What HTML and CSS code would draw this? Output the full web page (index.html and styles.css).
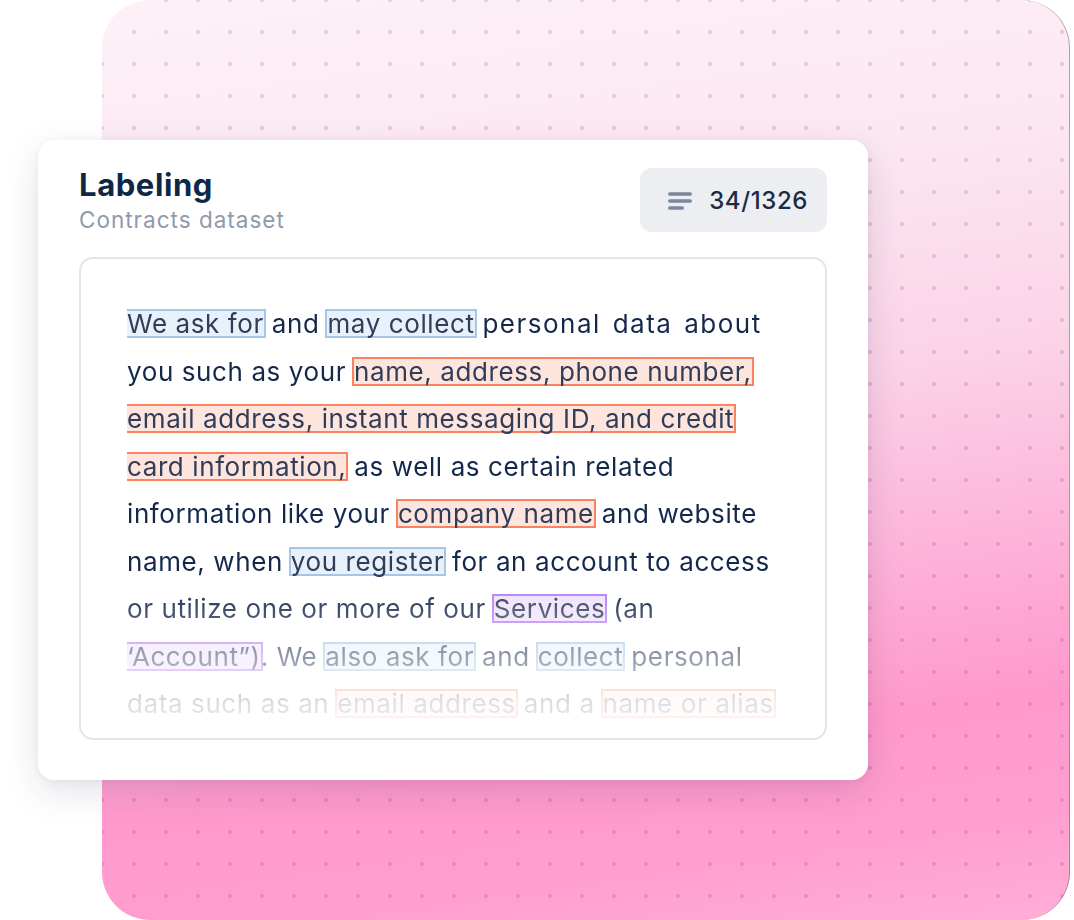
FILE: index.html
```html
<!DOCTYPE html>
<html>
<head>
<meta charset="utf-8">
<link rel="stylesheet" href="styles.css">
</head>
<body>
<div class="stage">
  <div class="panel"></div>
  <div class="card">
    <div class="card-head">
      <div class="titles">
        <div class="title">Labeling</div>
        <div class="subtitle">Contracts dataset</div>
      </div>
      <div class="badge">
        <svg class="badge-icon" width="24" height="20" viewBox="0 0 24 20">
          <rect x="0" y="2.3" width="24" height="3.4" rx="1.7" fill="#7a879c"/>
          <rect x="0" y="9.3" width="24" height="3.4" rx="1.7" fill="#7a879c"/>
          <rect x="0" y="16.3" width="16" height="3.4" rx="1.7" fill="#7a879c"/>
        </svg>
        <span class="count">34/1326</span>
      </div>
    </div>
    <div class="doc">
      <div class="doc-text"><span class="hl blue"><span class="t">We ask for</span></span> and <span class="hl blue"><span class="t">may collect</span></span> <span class="wide">personal data about</span><br>you such as your <span class="hl orange"><span class="t">name, address, phone number,<br>email address, instant messaging ID, and credit<br>card information,</span></span> as well as certain related<br>information like your <span class="hl orange"><span class="t">company name</span></span> and website<br>name, when <span class="hl blue"><span class="t">you register</span></span> for an account to access<br>or utilize one or more of our <span class="hl purple"><span class="t">Services</span></span> (an<br><span class="hl purple"><span class="t">‘Account”)</span></span>. We <span class="hl blue"><span class="t">also ask for</span></span> and <span class="hl blue"><span class="t">collect</span></span> personal<br>data such as an <span class="hl orange"><span class="t">email address</span></span> and a <span class="hl orange"><span class="t">name or alias </span></span></div>
    </div>
  </div>
</div>
</body>
</html>
```

FILE: styles.css
```css
html, body {
  margin: 0;
  padding: 0;
  background: #ffffff;
}

body {
  font-family: Inter, "Noto Sans", "Liberation Sans", sans-serif;
  width: 1074px;
  height: 920px;
  overflow: hidden;
}

.stage {
  position: relative;
  width: 1074px;
  height: 920px;
}

.panel {
  margin-left: 102px;
  width: 967px;
  height: 920px;
  border-radius: 48px;
  border-right: 1px solid rgba(120, 90, 110, 0.55);
  background-color: #fdeef6;
  background-image:
    radial-gradient(circle, rgba(140, 50, 100, 0.19) 1.8px, rgba(140, 50, 100, 0) 2.3px),
    linear-gradient(172deg, #fdf1f8 0%, #fce6f1 25%, #fbd3e7 45%, #fdb5da 62%, #ff99cc 78%, #ff9fcf 90%, #ffaed8 100%);
  background-size: 32px 32px, 100% 100%;
  background-position: -16px -16px, 0 0;
}

.card {
  position: absolute;
  left: 38px;
  top: 140px;
  width: 748px;
  height: 572px;
  padding: 28px 41px 40px 41px;
  background: #ffffff;
  border-radius: 16px;
  box-shadow: 0 12px 36px rgba(25, 35, 70, 0.12), 0 2px 8px rgba(25, 35, 70, 0.05);
  display: flex;
  flex-direction: column;
}

.card-head {
  display: flex;
  justify-content: space-between;
  align-items: flex-start;
  height: 64px;
  margin-bottom: 25px;
}

.title {
  font-size: 31px;
  line-height: 34px;
  font-weight: 700;
  color: #0f2747;
  letter-spacing: 0.6px;
}

.subtitle {
  font-size: 22.5px;
  line-height: 35px;
  font-weight: 400;
  color: #8f9aab;
  letter-spacing: 1px;
}

.badge {
  display: flex;
  align-items: center;
  gap: 17px;
  height: 64px;
  padding: 0 19px 0 28px;
  background: #eceef2;
  border-radius: 12px;
  box-sizing: border-box;
}

.badge-icon {
  display: block;
}

.count {
  font-size: 24px;
  font-weight: 500;
  color: #1b2a45;
  letter-spacing: 0.6px;
}

.doc {
  flex: 1;
  border: 2px solid #e3e5e9;
  border-radius: 14px;
  padding: 41px 0 0 46px;
  overflow: hidden;
}

.doc-text {
  font-size: 26px;
  line-height: 47.5px;
  letter-spacing: 0.6px;
  color: #14284b;
  white-space: nowrap;
  -webkit-mask-image: linear-gradient(to bottom, #000 0, #000 285px, rgba(0,0,0,0.5) 353px, rgba(0,0,0,0.17) 400px, rgba(0,0,0,0.08) 430px);
  mask-image: linear-gradient(to bottom, #000 0, #000 285px, rgba(0,0,0,0.5) 353px, rgba(0,0,0,0.17) 400px, rgba(0,0,0,0.08) 430px);
}

.wide {
  letter-spacing: 1.5px;
  word-spacing: 3px;
}

.hl {
  font-size: 21px;
  vertical-align: 2px;
  border: 2px solid;
  -webkit-box-decoration-break: clone;
  box-decoration-break: clone;
  margin: 0 -2px;
}

.hl .t {
  font-size: 26px;
  vertical-align: -2px;
  color: #2f3d58;
}

.blue {
  background: #e8f1fb;
  border-color: #a6c5e7;
}

.orange {
  background: #fde4dd;
  border-color: #f8835f;
}

.purple {
  background: #f0e1fd;
  border-color: #b87df4;
}
```
